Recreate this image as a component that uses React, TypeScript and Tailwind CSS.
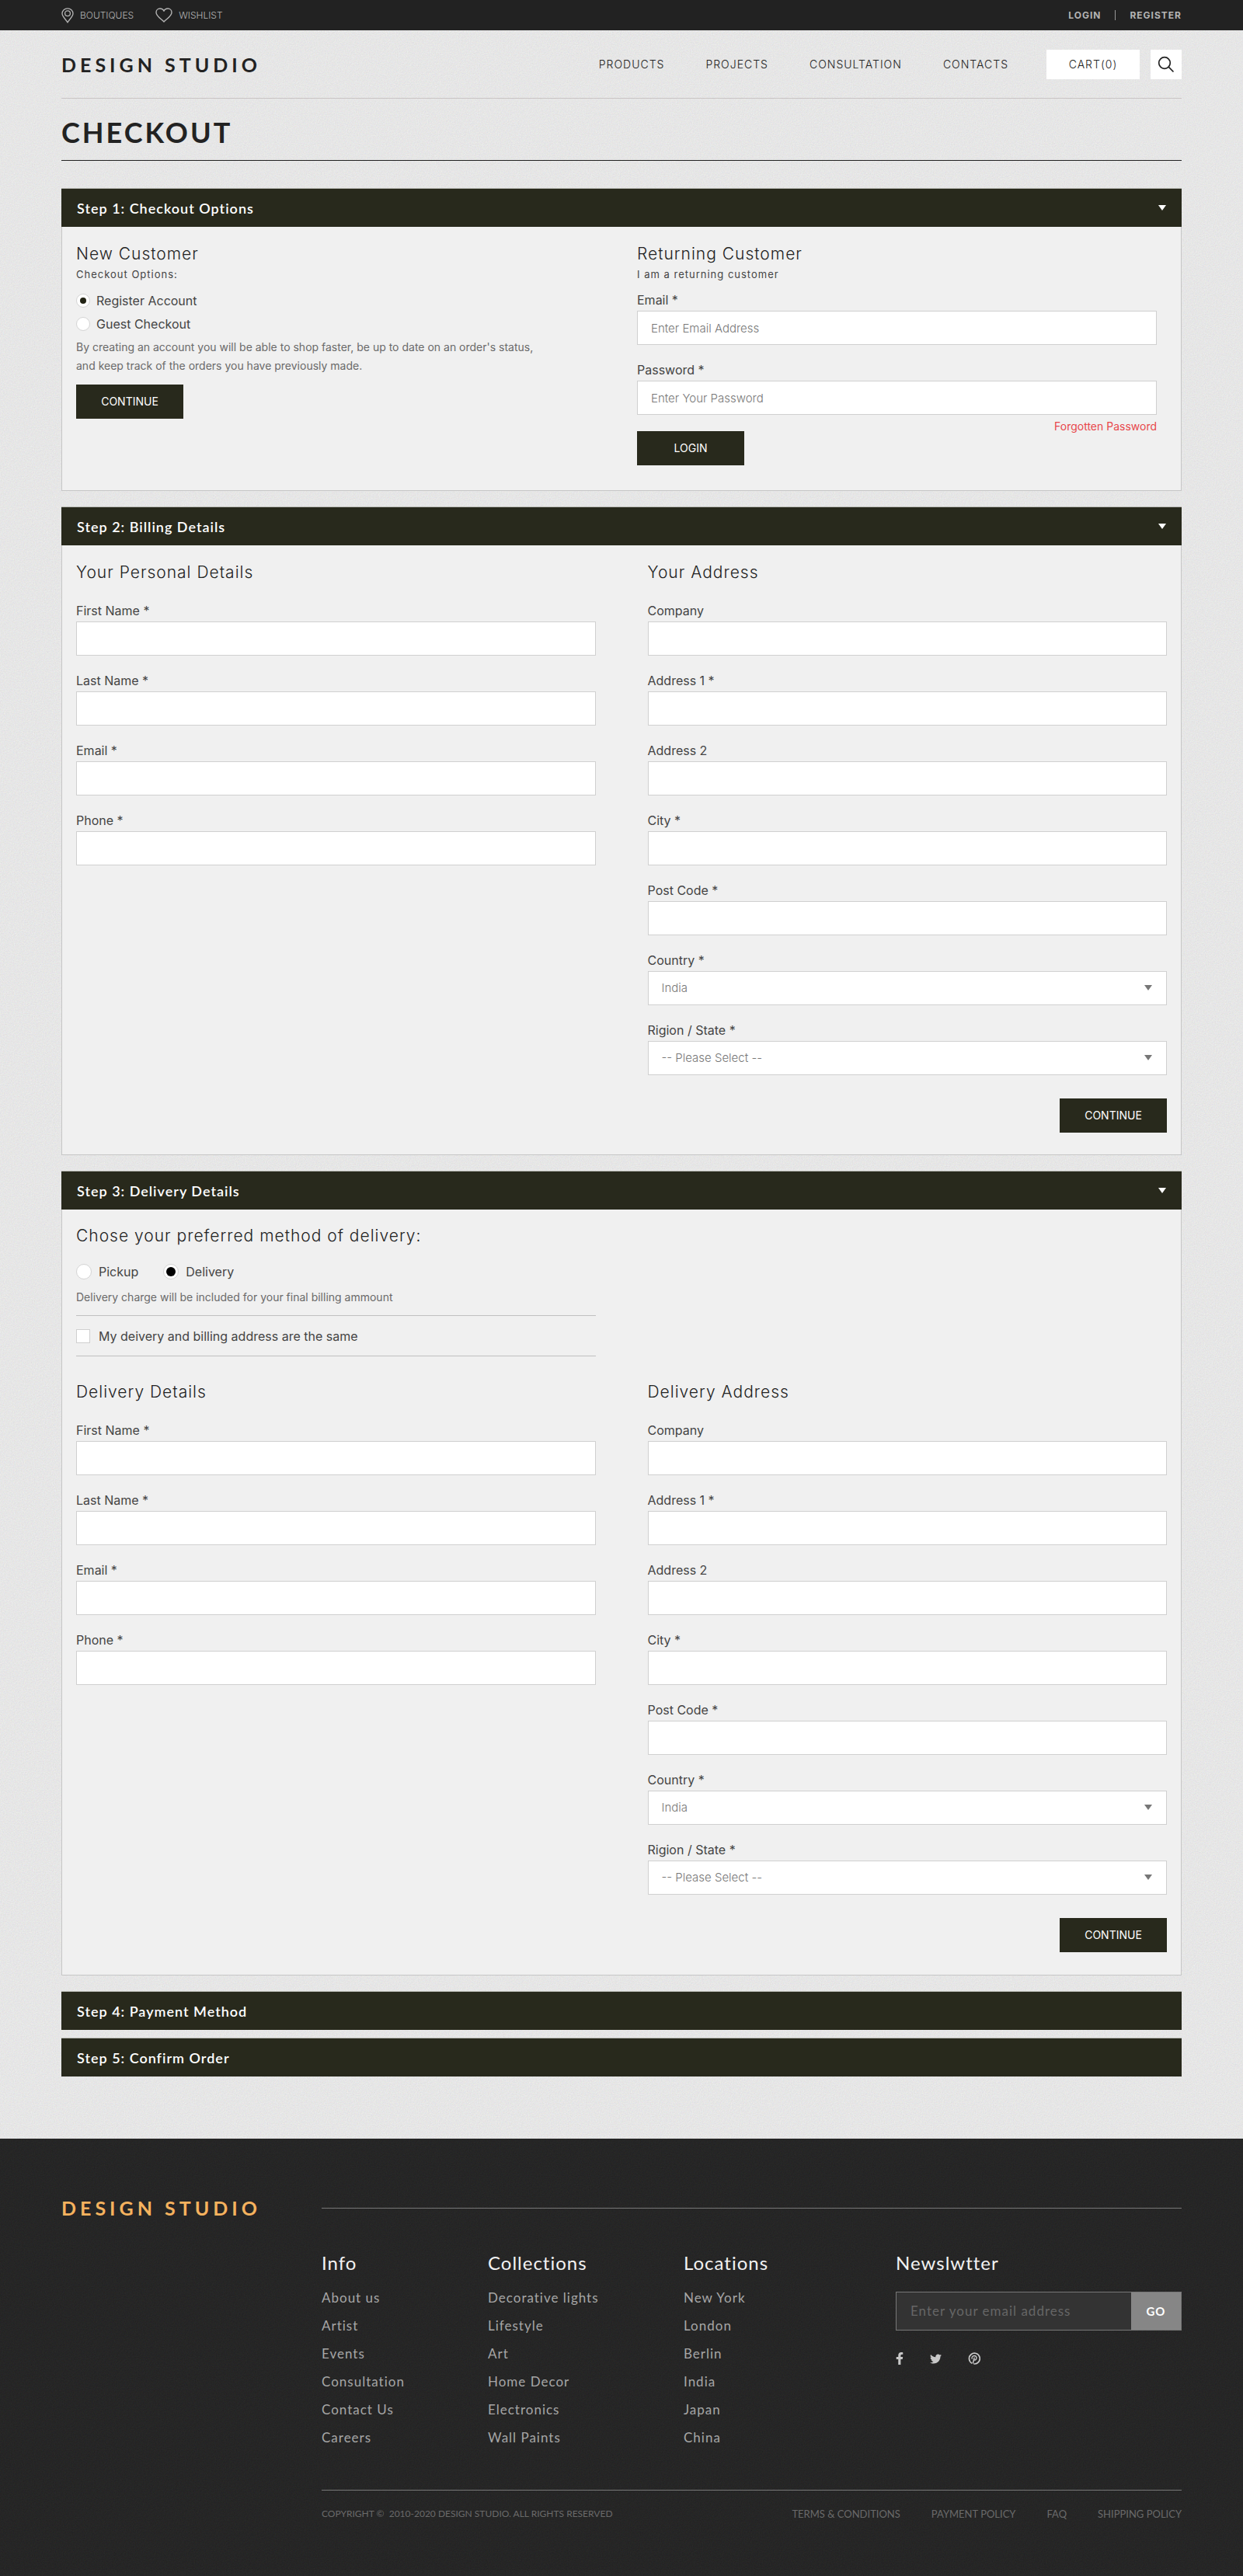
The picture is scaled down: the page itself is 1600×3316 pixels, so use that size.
import React, { useId } from "react";
import { FaFacebookF, FaTwitter } from "react-icons/fa";

const GOTHIC = "font-['Inter','Liberation_Sans',sans-serif]";
const GEO = "font-['Lato','Liberation_Sans',sans-serif]";

/* Fine paper grain laid behind a page area */
function Grain({ className }: { className: string }) {
  const id = useId();
  return (
    <svg aria-hidden="true" className={`pointer-events-none absolute inset-0 -z-10 h-full w-full ${className}`}>
      <filter id={id} x="0" y="0" width="100%" height="100%" colorInterpolationFilters="sRGB">
        <feTurbulence type="fractalNoise" baseFrequency="0.7" numOctaves="3" stitchTiles="stitch" />
        <feColorMatrix values="0.7 0.2 0.1 0 0  0.2 0.7 0.1 0 0  0.1 0.2 0.7 0 0  0 0 0 0 1" />
      </filter>
      <rect width="100%" height="100%" filter={`url(#${id})`} />
    </svg>
  );
}

function PinIcon() {
  return (
    <svg aria-hidden="true" width="16" height="20" viewBox="0 0 16 20" fill="none" stroke="currentColor" strokeWidth="1.3">
      <path d="M8 19C6.3 15.400 1 11.600 1 7.600a7 6.800 0 0 1 14 0C15 11.600 9.700 15.400 8 19Z" strokeLinejoin="round" />
      <circle cx="8" cy="7.300" r="3.400" />
    </svg>
  );
}

function HeartIcon() {
  return (
    <svg aria-hidden="true" width="22" height="19" viewBox="0 0 22 19" fill="none" stroke="currentColor" strokeWidth="1.400">
      <path
        d="M11 18C8.500 15 1 10.900 1 5.900C1 3.100 3.200 1 5.900 1C8.300 1 10.200 2.300 11 4.300C11.800 2.300 13.700 1 16.100 1C18.800 1 21 3.100 21 5.900C21 10.900 13.500 15 11 18Z"
        strokeLinejoin="round"
      />
    </svg>
  );
}

function SearchIcon() {
  return (
    <svg aria-hidden="true" width="22" height="22" viewBox="0 0 22 22" fill="none" stroke="currentColor" strokeWidth="1.700">
      <circle cx="9" cy="9" r="7.300" />
      <path d="M14.200 14.200L20.500 20.500" />
    </svg>
  );
}

function PinterestIcon() {
  return (
    <svg aria-hidden="true" width="16" height="16" viewBox="0 0 16 16" fill="none" stroke="currentColor">
      <path d="M5.200 14.200A6.900 6.900 0 1 1 7.400 14.900" strokeWidth="1.700" />
      <path d="M5.400 8.800C4.300 6.500 5.700 4.500 8.100 4.500C10.200 4.500 11.300 5.900 10.900 7.700C10.500 9.900 8.700 10.500 7.600 9.400" strokeWidth="1.400" />
      <path d="M8.200 6.600L6.300 14.500" strokeWidth="1.500" />
    </svg>
  );
}

function Caret({ className = "" }: { className?: string }) {
  return (
    <svg aria-hidden="true" width="10" height="7" viewBox="0 0 10 7" fill="currentColor" className={className}>
      <path d="M0 0H10L5 7Z" />
    </svg>
  );
}

function Logo({ className }: { className: string }) {
  return (
    <a href="#" className={`${GEO} text-[25px] leading-7 font-bold tracking-[5px] whitespace-nowrap ${className}`}>
      DESIGN STUDIO
    </a>
  );
}

function StepBar({ title, open }: { title: string; open?: boolean }) {
  return (
    <h2 className="border-t border-[#b9bab4] bg-[#28291c] text-white">
      <button type="button" aria-expanded={!!open} className="flex h-[49px] w-full items-center justify-between px-5 text-left">
        <span className={`${GEO} text-lg leading-6 font-semibold tracking-[1px]`}>{title}</span>
        {open && <Caret />}
      </button>
    </h2>
  );
}

function Step({ title, children }: { title: string; children: React.ReactNode }) {
  return (
    <section>
      <StepBar title={title} open />
      <div className="border-x border-b border-[#c6c6c6] bg-[#f0f0f0]">{children}</div>
    </section>
  );
}

function Heading({ children }: { children: React.ReactNode }) {
  return <h3 className="text-[21px] leading-7 font-light tracking-[1px] text-[#222]">{children}</h3>;
}

const BOX =
  "h-11 w-full rounded-none border border-[#d0d0d0] bg-white px-[17px] text-[15px] font-light text-[#777] outline-none placeholder:text-[#777]";
const LABEL = "mb-[2px] block text-base leading-6 text-[#444]";

function Field({ label, type = "text", placeholder }: { label: string; type?: string; placeholder?: string }) {
  const id = useId();
  return (
    <div>
      <label htmlFor={id} className={LABEL}>{label}</label>
      <input id={id} type={type} placeholder={placeholder} className={BOX} />
    </div>
  );
}

function SelectField({ label, options }: { label: string; options: string[] }) {
  const id = useId();
  return (
    <div>
      <label htmlFor={id} className={LABEL}>{label}</label>
      <div className="relative">
        <select id={id} className={`${BOX} appearance-none`}>
          {options.map((o) => (
            <option key={o}>{o}</option>
          ))}
        </select>
        <Caret className="pointer-events-none absolute top-[18px] right-[19px] text-[#777]" />
      </div>
    </div>
  );
}

function DarkButton({ children }: { children: React.ReactNode }) {
  return (
    <button type="button" className="h-11 w-[138px] bg-[#28291c] text-sm text-white">
      {children}
    </button>
  );
}

const RADIO =
  "grid shrink-0 appearance-none place-items-center rounded-full border border-[#d4d4d4] bg-white before:rounded-full";

function AddressForms({ left, right }: { left: string; right: string }) {
  return (
    <div className="grid grid-cols-2 gap-x-[67px]">
      <div>
        <Heading>{left}</Heading>
        <div className="mt-[23px] flex flex-col gap-5">
          <Field label="First Name *" />
          <Field label="Last Name *" />
          <Field label="Email *" />
          <Field label="Phone *" />
        </div>
      </div>
      <div>
        <Heading>{right}</Heading>
        <div className="mt-[23px] flex flex-col gap-5">
          <Field label="Company" />
          <Field label="Address 1 *" />
          <Field label="Address 2" />
          <Field label="City *" />
          <Field label="Post Code *" />
          <SelectField label="Country *" options={["India"]} />
          <SelectField label="Rigion / State *" options={["-- Please Select --"]} />
        </div>
        <div className="mt-[30px] flex justify-end">
          <DarkButton>CONTINUE</DarkButton>
        </div>
      </div>
    </div>
  );
}

function TopBar() {
  return (
    <div className={`${GOTHIC} flex h-[39px] items-center justify-between bg-[#222] px-[79px] text-xs text-[#b4b4b4]`}>
      <div className="flex items-center font-light">
        <a href="#" className="flex items-center gap-2"><PinIcon />BOUTIQUES</a>
        <a href="#" className="ml-7 flex items-center gap-2"><HeartIcon />WISHLIST</a>
      </div>
      <div className="flex items-center font-bold tracking-[1px]">
        <a href="#">LOGIN</a>
        <span className="mx-[18px] h-[13px] w-px bg-[#999]" />
        <a href="#">REGISTER</a>
      </div>
    </div>
  );
}

function Header() {
  return (
    <header className="flex h-[88px] items-center justify-between border-b border-[#c9c4c4]">
      <Logo className="text-[#222]" />
      <div className={`${GOTHIC} flex items-center text-sm font-light tracking-[1px] text-[#222]`}>
        <nav className="flex gap-[53px]">
          {["PRODUCTS", "PROJECTS", "CONSULTATION", "CONTACTS"].map((n) => (
            <a key={n} href="#">{n}</a>
          ))}
        </nav>
        <button type="button" className="ml-[49px] h-[38px] w-[120px] bg-white tracking-[1px]">CART(0)</button>
        <button type="button" aria-label="Search" className="ml-[14px] grid h-[38px] w-10 place-items-center bg-white">
          <SearchIcon />
        </button>
      </div>
    </header>
  );
}

function CheckoutOptions() {
  return (
    <Step title="Step 1: Checkout Options">
      <div className="grid grid-cols-2 gap-x-[53px] pt-[21px] pr-[31px] pb-8 pl-[18px]">
        <div>
          <Heading>New Customer</Heading>
          <p className="mt-[2px] text-[13px] leading-5 tracking-[1px] text-[#444]">Checkout Options:</p>
          <div className="mt-3 flex flex-col gap-[6px] text-base leading-6 text-[#444]">
            <label className="flex items-center gap-2">
              <input type="radio" name="account" defaultChecked className={`${RADIO} size-[18px] before:size-2 checked:before:bg-[#222314]`} />
              Register Account
            </label>
            <label className="flex items-center gap-2">
              <input type="radio" name="account" className={`${RADIO} size-[18px] before:size-2 checked:before:bg-[#222314]`} />
              Guest Checkout
            </label>
          </div>
          <p className="mt-[6px] mb-3 text-sm leading-6 text-[#6a6a6a]">
            By creating an account you will be able to shop faster, be up to date on an order's status,
            <br />
            and keep track of the orders you have previously made.
          </p>
          <DarkButton>CONTINUE</DarkButton>
        </div>
        <div>
          <Heading>Returning Customer</Heading>
          <p className="mt-[2px] text-[13px] leading-5 tracking-[1px] text-[#444]">I am a returning customer</p>
          <div className="mt-[11px] flex flex-col gap-5">
            <Field label="Email *" type="email" placeholder="Enter Email Address" />
            <Field label="Password *" type="password" placeholder="Enter Your Password" />
          </div>
          <div className="flex items-start justify-between">
            <div className="mt-[21px]">
              <DarkButton>LOGIN</DarkButton>
            </div>
            <a href="#" className="mt-[5px] text-sm leading-5 text-[#e8474b]">Forgotten Password</a>
          </div>
        </div>
      </div>
    </Step>
  );
}

function DeliveryDetails() {
  return (
    <Step title="Step 3: Delivery Details">
      <div className="px-[18px] pt-5 pb-[29px]">
        <Heading>Chose your preferred method of delivery:</Heading>
        <div className="mt-5 flex gap-8 text-base leading-6 text-[#444]">
          <label className="flex items-center gap-[9px]">
            <input type="radio" name="delivery" className={`${RADIO} size-5 before:size-3 checked:before:bg-black`} />
            Pickup
          </label>
          <label className="flex items-center gap-[9px]">
            <input type="radio" name="delivery" defaultChecked className={`${RADIO} size-5 before:size-3 checked:before:bg-black`} />
            Delivery
          </label>
        </div>
        <div className="grid grid-cols-2 gap-x-[67px]">
          <div>
            <p className="mt-[11px] mb-[13px] text-sm leading-5 text-[#6a6a6a]">
              Delivery charge will be included for your final billing ammount
            </p>
            <label className="flex h-[53px] items-center gap-[11px] border-y border-[#c0c0c0] text-base leading-6 text-[#444]">
              <input type="checkbox" className="size-[18px] shrink-0 appearance-none border border-[#d0d0d0] bg-white checked:bg-[#28291c]" />
              My deivery and billing address are the same
            </label>
          </div>
        </div>
        <div className="mt-8">
          <AddressForms left="Delivery Details" right="Delivery Address" />
        </div>
      </div>
    </Step>
  );
}

function LinkColumn({ title, items }: { title: string; items: string[] }) {
  return (
    <div>
      <h4 className="text-2xl leading-8 tracking-[1px] text-[#f2f2f2]">{title}</h4>
      <ul className="mt-[11px] text-[17px] leading-9 tracking-[1px] text-[#a6a6a6]">
        {items.map((i) => (
          <li key={i}><a href="#">{i}</a></li>
        ))}
      </ul>
    </div>
  );
}

function Footer() {
  return (
    <footer className={`${GEO} relative isolate flex bg-[#1f1f1f] px-[79px] pt-[75px] pb-[70px]`}>
      <Grain className="opacity-[0.07]" />
      <div className="w-[335px] shrink-0">
        <Logo className="text-[#f5b25e]" />
      </div>
      <div className="flex-1">
        <hr className="mt-[14px] border-[#777]" />
        <div className="mt-[54px] grid grid-cols-[214fr_252fr_273fr_368fr]">
          <LinkColumn title="Info" items={["About us", "Artist", "Events", "Consultation", "Contact Us", "Careers"]} />
          <LinkColumn title="Collections" items={["Decorative lights", "Lifestyle", "Art", "Home Decor", "Electronics", "Wall Paints"]} />
          <LinkColumn title="Locations" items={["New York", "London", "Berlin", "India", "Japan", "China"]} />
          <div>
            <h4 className="text-2xl leading-8 tracking-[1px] text-[#f2f2f2]">Newslwtter</h4>
            <form className="mt-[21px] flex h-[50px] border border-[#777] bg-[#333]">
              <input
                type="email"
                aria-label="Email address"
                placeholder="Enter your email address"
                className="min-w-0 flex-1 bg-transparent px-[18px] text-[17px] tracking-[1px] text-white outline-none placeholder:text-[#666]"
              />
              <button type="button" className="w-[64px] bg-[#868686] text-[15px] font-bold tracking-[1px] text-white">GO</button>
            </form>
            <div className="mt-7 flex h-4 items-center text-[#c8c8c8]">
              <a href="#" aria-label="Facebook" className="w-[44px]"><FaFacebookF className="h-4 w-[10px]" /></a>
              <a href="#" aria-label="Twitter" className="w-[49px]"><FaTwitter className="size-[15px]" /></a>
              <a href="#" aria-label="Pinterest"><PinterestIcon /></a>
            </div>
          </div>
        </div>
        <div className="mt-[49px] flex justify-between border-t border-[#777] pt-5 leading-5 text-[#6a6a6a]">
          <p className="text-xs leading-5 whitespace-pre">{"COPYRIGHT ©  2010-2020 DESIGN STUDIO. ALL RIGHTS RESERVED"}</p>
          <nav className="flex gap-10 text-[13px]">
            {["TERMS & CONDITIONS", "PAYMENT POLICY", "FAQ", "SHIPPING POLICY"].map((n) => (
              <a key={n} href="#">{n}</a>
            ))}
          </nav>
        </div>
      </div>
    </footer>
  );
}

export default function App() {
  return (
    <div className="relative isolate bg-[#f5f5f5]">
      <Grain className="opacity-[0.12]" />
      <TopBar />
      <div className="px-[79px] pb-20">
        <Header />
        <h1 className={`${GEO} border-b border-[#222] pt-[21px] pb-[14px] text-[36px] leading-[44px] font-bold tracking-[3px] text-[#222]`}>
          CHECKOUT
        </h1>
        <main className={`${GOTHIC} mt-[35px] flex flex-col gap-5`}>
          <CheckoutOptions />
          <Step title="Step 2: Billing Details">
            <div className="px-[18px] pt-[21px] pb-7">
              <AddressForms left="Your Personal Details" right="Your Address" />
            </div>
          </Step>
          <DeliveryDetails />
          <div className="flex flex-col gap-[10px]">
            <StepBar title="Step 4: Payment Method" />
            <StepBar title="Step 5: Confirm Order" />
          </div>
        </main>
      </div>
      <Footer />
    </div>
  );
}
